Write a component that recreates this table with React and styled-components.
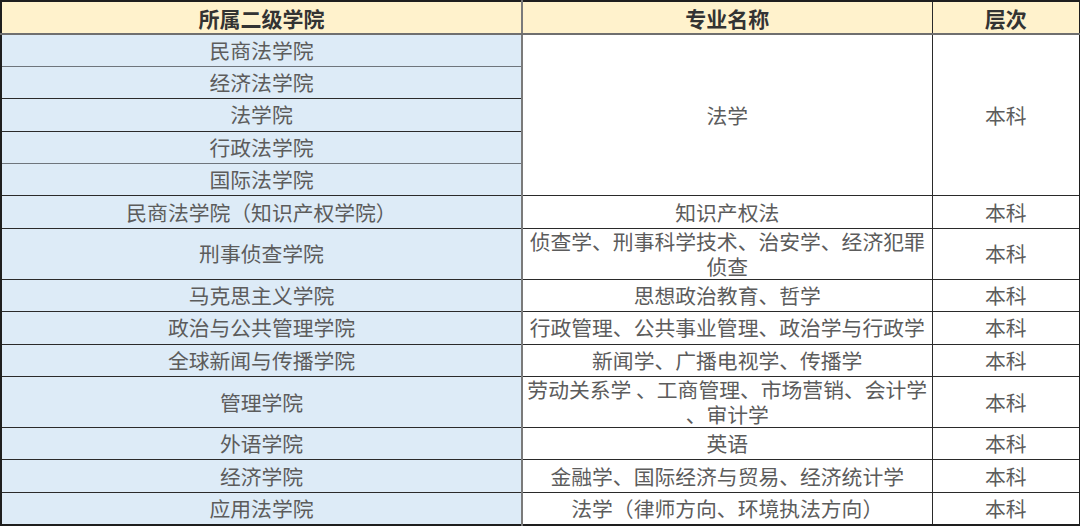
import React from "react";
import styled, { createGlobalStyle } from "styled-components";

const Global = createGlobalStyle`
  html, body { margin: 0; padding: 0; background: #ffffff; }
  body { font-family: "Noto Sans CJK SC", "Noto Sans", sans-serif; }
`;

const Table = styled.table`
  border-collapse: collapse;
  table-layout: fixed;
  width: 1079px;
  border: 2px solid #1e1e1e;
  font-family: "Noto Sans CJK SC", "Noto Sans", sans-serif;
`;

const HeadCell = styled.th`
  background: #fff2cc;
  color: #333333;
  font-size: 21px;
  font-weight: 600;
  line-height: 26px;
  height: 31px;
  padding: 0;
  text-align: center;
  vertical-align: middle;
  border-bottom: 2px solid #6f6f6f;
  border-right: ${(p) => (p.$first ? "2px solid #7a7a7a" : "1px solid #2a2a2a")};
`;

const Row = styled.tr`
  height: ${(p) => (p.$tall ? "50.5px" : "32.4px")};
`;

const Cell = styled.td`
  background: ${(p) => (p.$college ? "#ddebf7" : "#ffffff")};
  color: #5c5c5c;
  font-size: 20.8px;
  font-weight: 400;
  line-height: 25px;
  padding: 0 2px;
  text-align: center;
  vertical-align: middle;
  border-top: 1px solid ${(p) => (p.$soft ? "#6e757c" : "#2a2a2a")};
  border-bottom: 1px solid ${(p) => (p.$soft ? "#6e757c" : "#2a2a2a")};
  border-right: ${(p) => (p.$college ? "2px solid #7a7a7a" : "1px solid #2a2a2a")};
  white-space: nowrap;
`;

const groupColleges = ["民商法学院", "经济法学院", "法学院", "行政法学院", "国际法学院"];

const rows = [
  { college: "民商法学院（知识产权学院）", major: ["知识产权法"] },
  { college: "刑事侦查学院", major: ["侦查学、刑事科学技术、治安学、经济犯罪", "侦查"], tall: true },
  { college: "马克思主义学院", major: ["思想政治教育、哲学"] },
  { college: "政治与公共管理学院", major: ["行政管理、公共事业管理、政治学与行政学"] },
  { college: "全球新闻与传播学院", major: ["新闻学、广播电视学、传播学"] },
  { college: "管理学院", major: ["劳动关系学 、工商管理、市场营销、会计学", "、审计学"], tall: true },
  { college: "外语学院", major: ["英语"] },
  { college: "经济学院", major: ["金融学、国际经济与贸易、经济统计学"] },
  { college: "应用法学院", major: ["法学（律师方向、环境执法方向）"] },
];

export default function App() {
  return (
    <>
      <Global />
      <Table>
        <colgroup>
          <col style={{ width: 521 }} />
          <col style={{ width: 410 }} />
          <col style={{ width: 148 }} />
        </colgroup>
        <thead>
          <tr>
            <HeadCell $first>所属二级学院</HeadCell>
            <HeadCell>专业名称</HeadCell>
            <HeadCell>层次</HeadCell>
          </tr>
        </thead>
        <tbody>
          {groupColleges.map((c, i) => (
            <Row key={c}>
              <Cell $college $soft={i === 0 || i === 3}>{c}</Cell>
              {i === 0 && (
                <>
                  <Cell rowSpan={5}>法学</Cell>
                  <Cell rowSpan={5}>本科</Cell>
                </>
              )}
            </Row>
          ))}
          {rows.map((r) => (
            <Row key={r.college} $tall={r.tall}>
              <Cell $college>{r.college}</Cell>
              <Cell>
                {r.major.map((m, j) => (
                  <React.Fragment key={j}>
                    {j > 0 && <br />}
                    {m}
                  </React.Fragment>
                ))}
              </Cell>
              <Cell>本科</Cell>
            </Row>
          ))}
        </tbody>
      </Table>
    </>
  );
}
